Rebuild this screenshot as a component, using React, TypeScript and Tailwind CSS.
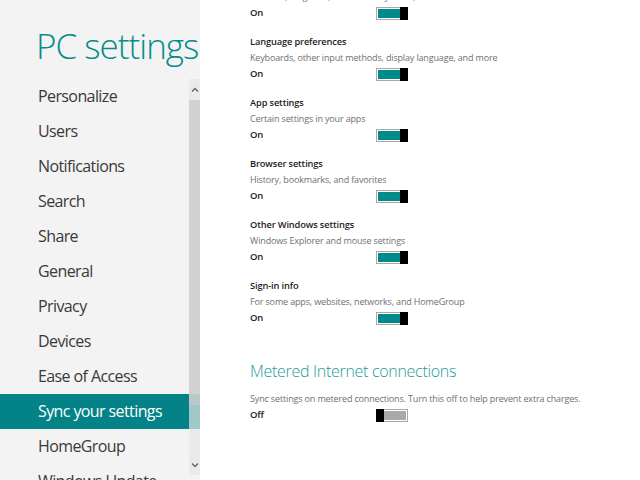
import React from 'react';

const menu = [
  'Personalize',
  'Users',
  'Notifications',
  'Search',
  'Share',
  'General',
  'Privacy',
  'Devices',
  'Ease of Access',
  'Sync your settings',
  'HomeGroup',
  'Windows Update',
];

const syncItems = [
  { title: 'Ease of Access', desc: 'Narrator, Magnifier, on-screen keyboard, and more' },
  { title: 'Language preferences', desc: 'Keyboards, other input methods, display language, and more' },
  { title: 'App settings', desc: 'Certain settings in your apps' },
  { title: 'Browser settings', desc: 'History, bookmarks, and favorites' },
  { title: 'Other Windows settings', desc: 'Windows Explorer and mouse settings' },
  { title: 'Sign-in info', desc: 'For some apps, websites, networks, and HomeGroup' },
];

const Toggle: React.FC<{ on: boolean }> = ({ on }) => (
  <div className="w-[32px] h-[13px] border border-[#a8a8a8] bg-white p-[1px] flex">
    {on ? (
      <>
        <div className="flex-1 bg-[#008a8a]" />
        <div className="w-[8px] -my-[2px] -mr-[2px] bg-black" />
      </>
    ) : (
      <>
        <div className="w-[8px] -my-[2px] -ml-[2px] bg-black" />
        <div className="flex-1 bg-[#a9a9a9]" />
      </>
    )}
  </div>
);

const Row: React.FC<{ on: boolean }> = ({ on }) => (
  <div className="h-[16px] flex items-center">
    <span className="w-[126px] font-semibold text-[#1d1d1d] text-[9.5px]">{on ? 'On' : 'Off'}</span>
    <Toggle on={on} />
  </div>
);

export default function App() {
  return (
    <div className="w-[640px] h-[480px] flex overflow-hidden bg-white font-['Open_Sans','Noto_Sans',sans-serif]">
      {/* left nav */}
      <aside className="relative w-[200px] h-full bg-[#f3f3f3] shrink-0">
        <div className="h-[79px] pl-[36px] pt-[24px]">
          <h1 className="text-[35px] leading-[44px] font-light text-[#078c8c] tracking-[-1px] whitespace-nowrap">PC settings</h1>
        </div>
        <ul>
          {menu.map(m => (
            <li
              key={m}
              className={
                'h-[35px] pl-[38px] pb-[2px] flex items-center text-[16px] tracking-[-0.6px] whitespace-nowrap ' +
                (m === 'Sync your settings' ? 'bg-[#038387] text-white' : 'text-[#3a3a3a]')
              }
            >
              {m}
            </li>
          ))}
        </ul>

        {/* scrollbar overlay */}
        <div className="absolute left-[189px] top-[79px] w-[11px] h-[396px] bg-[#e6e6e6]/70 flex flex-col items-center">
          <div className="h-[21px] flex items-center">
            <svg width="8" height="5" viewBox="0 0 8 5"><path d="M1 4.5 L4 1.5 L7 4.5" fill="none" stroke="#666" strokeWidth="1.4" /></svg>
          </div>
          <div className="w-full h-[305px] bg-[#c8c8c8]/70" />
          <div className="flex-1" />
          <div className="h-[20px] flex items-center">
            <svg width="8" height="5" viewBox="0 0 8 5"><path d="M1 0.5 L4 3.5 L7 0.5" fill="none" stroke="#666" strokeWidth="1.4" /></svg>
          </div>
        </div>
      </aside>

      {/* right content */}
      <main className="flex-1 pl-[50px] text-[9px] leading-[16px] tracking-[-0.15px]">
        <div className="-mt-[27px]">
          {syncItems.map(s => (
            <div key={s.title} className="mb-[13px]">
              <div className="font-semibold text-[#1d1d1d] text-[9.3px]">{s.title}</div>
              <div className="text-[#707070] whitespace-nowrap">{s.desc}</div>
              <Row on />
            </div>
          ))}
        </div>

        <h2 className="mt-[33px] text-[16px] leading-[24px] font-light text-[#1e9a9a] tracking-[-0.3px] whitespace-nowrap">Metered Internet connections</h2>
        <div className="mt-[8px] text-[#707070] whitespace-nowrap">
          Sync settings on metered connections. Turn this off to help prevent extra charges.
        </div>
        <Row on={false} />
      </main>
    </div>
  );
}
